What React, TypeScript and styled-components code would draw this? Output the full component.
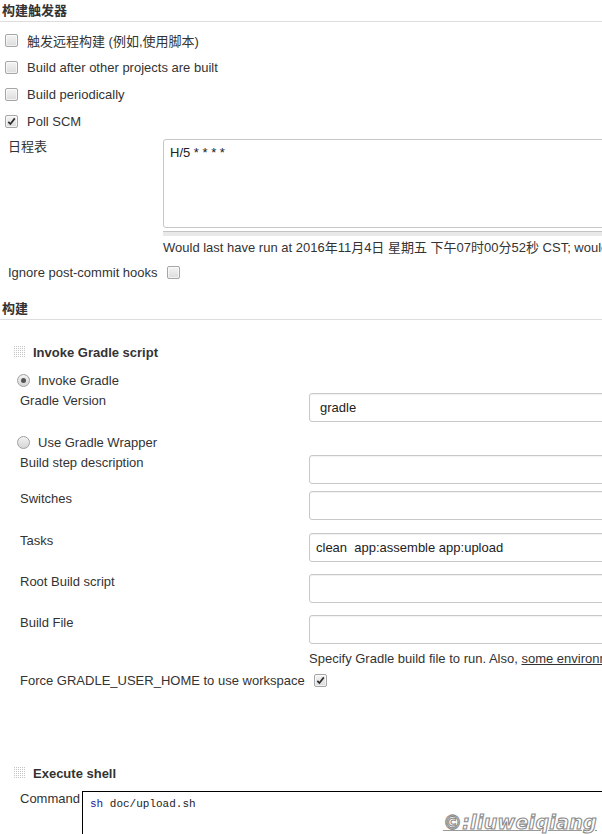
import React from "react";
import styled, { createGlobalStyle, css } from "styled-components";

const GlobalStyle = createGlobalStyle`
  html, body { margin: 0; padding: 0; background: #fff; overflow: hidden; }
  body {
    font-family: "Liberation Sans", Arial, "Noto Sans CJK SC", sans-serif;
    font-size: 13px;
    color: #333;
  }
`;

const Page = styled.div`
  position: relative;
  width: 602px;
  height: 834px;
  overflow: hidden;
`;

const SectionHeader = styled.div<{ $mt?: number }>`
  margin-top: ${(p) => p.$mt ?? 0}px;
  padding: 2px 0 2px 2px;
  line-height: 17px;
  font-weight: bold;
  border-bottom: 1px solid #ddd;
`;

const CheckBox = styled.span`
  display: inline-flex;
  align-items: center;
  justify-content: center;
  flex: none;
  width: 11px;
  height: 11px;
  border: 1px solid #a6a6a6;
  border-radius: 2px;
  background: linear-gradient(#f4f4f4, #dcdcdc);
  box-shadow: inset 0 0 0 1px rgba(255, 255, 255, 0.6);
`;

const Check = ({ checked }: { checked?: boolean }) => (
  <CheckBox>
    {checked && (
      <svg width="9" height="9" viewBox="0 0 9 9">
        <path d="M1.3 4.8 L3.4 7 L7.8 1.4" fill="none" stroke="#2c2c2c" strokeWidth="1.7" />
      </svg>
    )}
  </CheckBox>
);

const RadioDot = styled.span<{ $checked?: boolean }>`
  position: relative;
  flex: none;
  width: 11px;
  height: 11px;
  border: 1px solid #a0a0a0;
  border-radius: 50%;
  background: linear-gradient(#f2f2f2, #d6d6d6);
  ${(p) =>
    p.$checked &&
    css`
      &::after {
        content: "";
        position: absolute;
        left: 3px;
        top: 3px;
        width: 5px;
        height: 5px;
        border-radius: 50%;
        background: #555;
      }
    `}
`;

const CheckRow = styled.div`
  display: flex;
  align-items: center;
  gap: 9px;
  height: 27px;
  padding-left: 5px;
`;

const CheckList = styled.div`
  margin-top: 5px;
`;

const ScheduleGrid = styled.div`
  display: grid;
  grid-template-columns: 155px 1fr;
  padding-left: 8px;
  margin-top: 4px;
`;

const Label = styled.div`
  line-height: 15px;
  white-space: nowrap;
`;

const ScheduleBox = styled.div`
  width: calc(100% + 40px);
  border: 1px solid #c6c6c6;
  border-radius: 3px;
  padding: 5px 6px;
  box-sizing: border-box;
  height: 89px;
  line-height: 15px;
  color: #222;
`;

const ResizeBar = styled.div`
  width: calc(100% + 40px);
  margin-top: 3px;
  height: 4px;
  border-top: 1px solid #c4c4c4;
  background: #e9e9e9;
`;

const HelpText = styled.div<{ $mt?: number }>`
  margin-top: ${(p) => p.$mt ?? 0}px;
  line-height: 15px;
  white-space: nowrap;
`;

const InlineRow = styled.div<{ $mt?: number; $pl: number }>`
  display: flex;
  align-items: center;
  gap: 9px;
  height: 18px;
  margin-top: ${(p) => p.$mt ?? 0}px;
  padding-left: ${(p) => p.$pl}px;
  white-space: nowrap;
`;

const StepTitle = styled.div<{ $mt: number }>`
  display: flex;
  align-items: center;
  gap: 8px;
  height: 18px;
  margin-top: ${(p) => p.$mt}px;
  padding-left: 13px;
  font-weight: bold;
`;

const Handle = styled.span`
  flex: none;
  width: 12px;
  height: 12px;
  background: conic-gradient(#c4c4c4 25%, transparent 0) 0 0 / 2px 2px;
`;

const RadioRow = styled.div<{ $mt: number }>`
  display: flex;
  align-items: center;
  gap: 8px;
  height: 18px;
  margin-top: ${(p) => p.$mt}px;
  padding-left: 17px;
`;

const FieldRow = styled.div<{ $mt: number }>`
  display: grid;
  grid-template-columns: 289px 1fr;
  padding-left: 20px;
  margin-top: ${(p) => p.$mt}px;
`;

const TextInput = styled.div<{ $pl?: number }>`
  box-sizing: border-box;
  width: calc(100% + 40px);
  height: 29px;
  border: 1px solid #c8c8c8;
  border-radius: 3px;
  box-shadow: inset 0 1px 1px rgba(0, 0, 0, 0.06);
  padding-left: ${(p) => p.$pl ?? 6}px;
  display: flex;
  align-items: center;
  color: #222;
  white-space: pre;
`;

const HelpRow = styled.div<{ $mt: number }>`
  margin-top: ${(p) => p.$mt}px;
  padding-left: 309px;
  line-height: 15px;
  white-space: nowrap;
`;

const Link = styled.span`
  text-decoration: underline;
`;

const CommandRow = styled.div<{ $mt: number }>`
  display: grid;
  grid-template-columns: 62px 1fr;
  padding-left: 20px;
  margin-top: ${(p) => p.$mt}px;
`;

const CommandBox = styled.div`
  width: calc(100% + 40px);
  height: 80px;
  border-top: 1px solid #000;
  border-left: 1px solid #000;
  padding: 5px 7px;
  box-sizing: border-box;
  font-family: "Liberation Mono", "Noto Sans CJK SC", monospace;
  font-size: 11px;
  line-height: 14px;
  color: #222;
`;

const Keyword = styled.span`
  color: #2020a0;
`;

const Watermark = styled.div`
  position: absolute;
  right: 5px;
  bottom: 1px;
  font-family: "DejaVu Sans", sans-serif;
  font-weight: bold;
  font-style: italic;
  font-size: 19px;
  line-height: 21px;
  color: #fff;
  -webkit-text-stroke: 1.1px #8c8c8c;
  text-decoration: underline;
  text-decoration-color: #9a9a9a;
  letter-spacing: 0.3px;
`;

export default function App() {
  return (
    <Page>
      <GlobalStyle />
      <SectionHeader>构建触发器</SectionHeader>
      <CheckList>
        <CheckRow>
          <Check />
          <span>触发远程构建 (例如,使用脚本)</span>
        </CheckRow>
        <CheckRow>
          <Check />
          <span>Build after other projects are built</span>
        </CheckRow>
        <CheckRow>
          <Check />
          <span>Build periodically</span>
        </CheckRow>
        <CheckRow>
          <Check checked />
          <span>Poll SCM</span>
        </CheckRow>
      </CheckList>
      <ScheduleGrid>
        <Label>日程表</Label>
        <div>
          <ScheduleBox>H/5 * * * *</ScheduleBox>
          <ResizeBar />
          <HelpText $mt={4}>
            Would last have run at 2016年11月4日 星期五 下午07时00分52秒 CST; would next run at 2016年11月4日
          </HelpText>
        </div>
      </ScheduleGrid>
      <InlineRow $mt={8} $pl={8}>
        <span>Ignore post-commit hooks</span>
        <Check />
      </InlineRow>

      <SectionHeader $mt={17}>构建</SectionHeader>

      <StepTitle $mt={23}>
        <Handle />
        <span>Invoke Gradle script</span>
      </StepTitle>
      <RadioRow $mt={10}>
        <RadioDot $checked />
        <span>Invoke Gradle</span>
      </RadioRow>
      <FieldRow $mt={4}>
        <Label>Gradle Version</Label>
        <TextInput $pl={10}>gradle</TextInput>
      </FieldRow>
      <RadioRow $mt={11}>
        <RadioDot />
        <span>Use Gradle Wrapper</span>
      </RadioRow>
      <FieldRow $mt={4}>
        <Label>Build step description</Label>
        <TextInput />
      </FieldRow>
      <FieldRow $mt={7}>
        <Label>Switches</Label>
        <TextInput />
      </FieldRow>
      <FieldRow $mt={13}>
        <Label>Tasks</Label>
        <TextInput>clean  app:assemble app:upload</TextInput>
      </FieldRow>
      <FieldRow $mt={12}>
        <Label>Root Build script</Label>
        <TextInput />
      </FieldRow>
      <FieldRow $mt={12}>
        <Label>Build File</Label>
        <TextInput />
      </FieldRow>
      <HelpRow $mt={7}>
        Specify Gradle build file to run. Also, <Link>some environment variables are available to the build script</Link>
      </HelpRow>
      <InlineRow $mt={5} $pl={20}>
        <span>Force GRADLE_USER_HOME to use workspace</span>
        <Check checked />
      </InlineRow>

      <StepTitle $mt={75}>
        <Handle />
        <span>Execute shell</span>
      </StepTitle>
      <CommandRow $mt={9}>
        <Label>Command</Label>
        <CommandBox>
          <Keyword>sh</Keyword> doc/upload.sh
        </CommandBox>
      </CommandRow>
      <Watermark>©:liuweiqiang</Watermark>
    </Page>
  );
}
